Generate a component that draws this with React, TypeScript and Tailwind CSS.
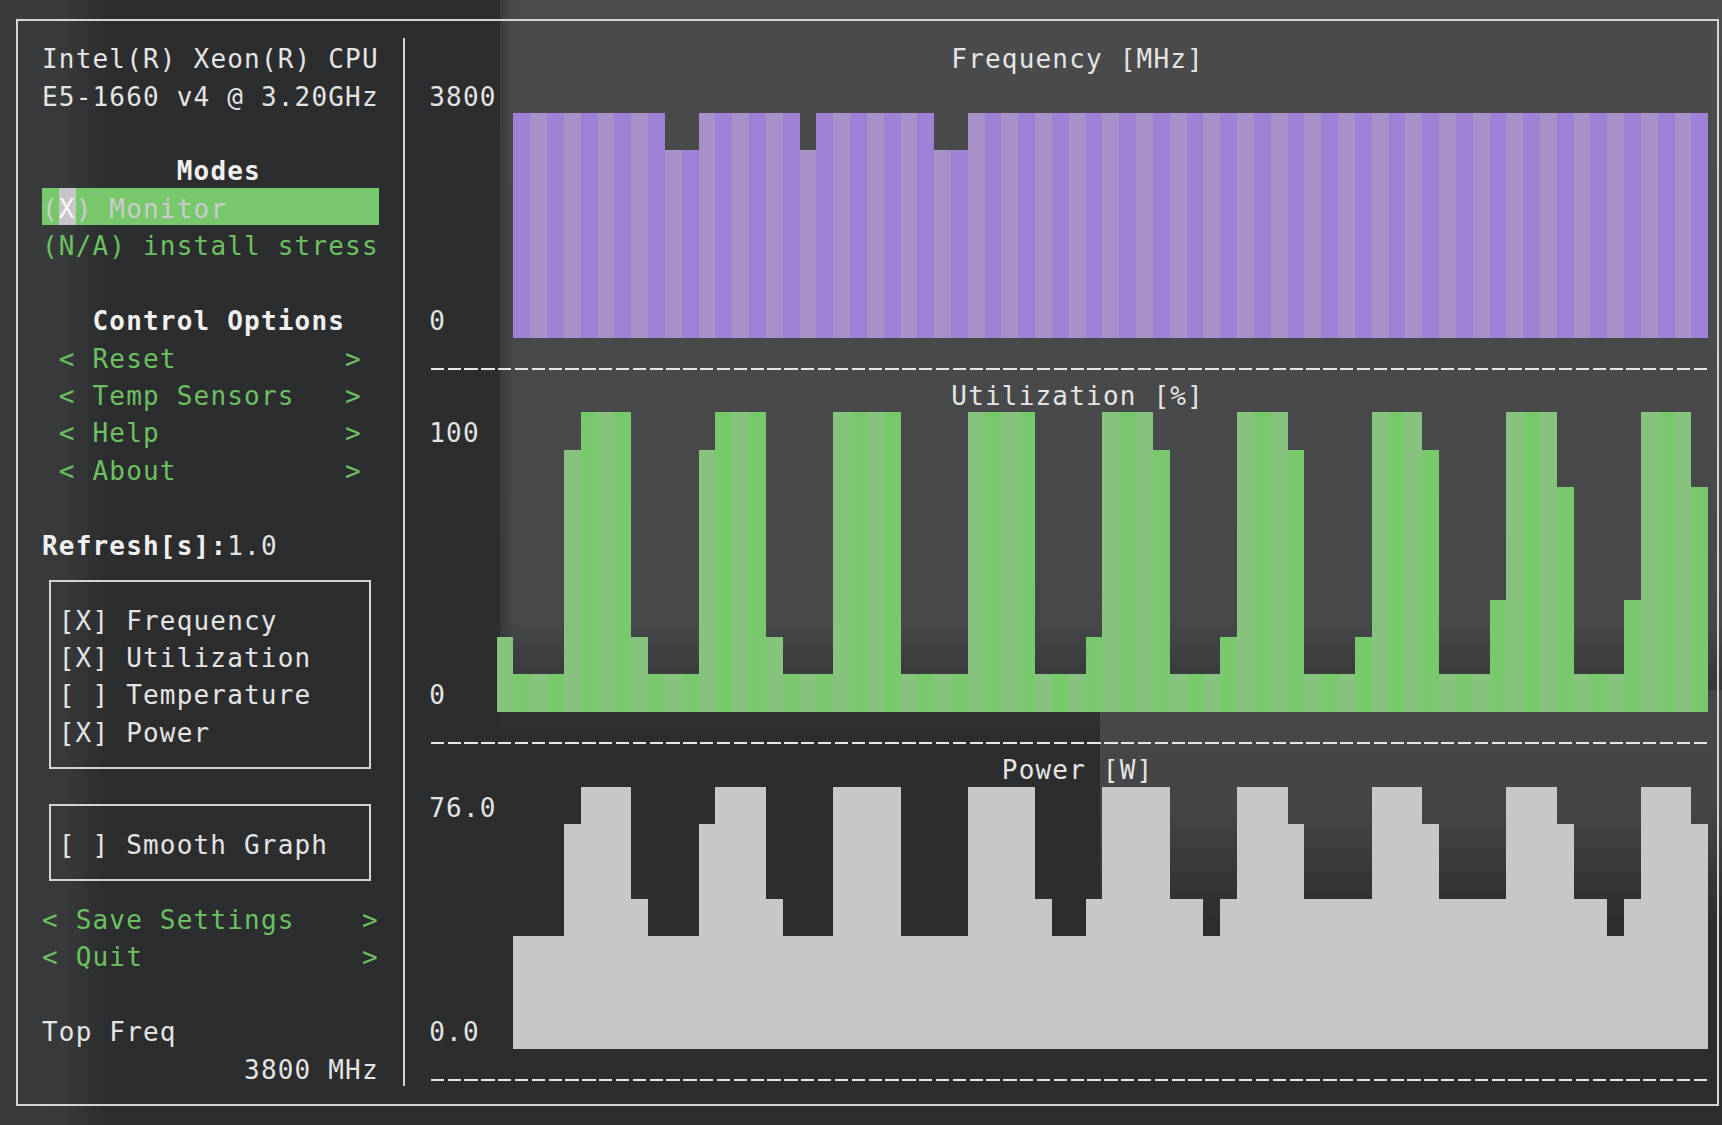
const RH = 37.43

// run-length lists: [height in rows, number of columns]
const UTIL: [number, number][] = [
  [2, 1], [1, 3], [7, 1], [8, 3], [2, 1], [1, 3], [7, 1], [8, 3], [2, 1], [1, 3], [8, 4], [1, 4], [8, 4],
  [1, 3], [2, 1], [8, 3], [7, 1], [1, 3], [2, 1], [8, 3], [7, 1], [1, 3], [2, 1], [8, 3], [7, 1], [1, 3],
  [3, 1], [8, 3], [6, 1], [1, 3], [3, 1], [8, 3], [6, 1],
]
const POWER: [number, number][] = [
  [3, 3], [6, 1], [7, 3], [4, 1], [3, 3], [6, 1], [7, 3], [4, 1], [3, 3], [7, 4], [3, 4], [7, 4], [4, 1],
  [3, 2], [4, 1], [7, 4], [4, 2], [3, 1], [4, 1], [7, 3], [6, 1], [4, 4], [7, 3], [6, 1], [4, 4], [7, 3],
  [6, 1], [4, 2], [3, 1], [4, 1], [7, 3], [6, 1],
]

function expand(runs: [number, number][]) {
  return runs.flatMap(([h, n]) => Array.from({ length: n }, () => h))
}

const FREQ = Array.from({ length: 71 }, (_, i) => ([39, 40, 47, 55, 56].includes(i + 30) ? 5 : 6))

function Row({ className = '', children }: { className?: string; children?: React.ReactNode }) {
  return <div className={`h-[37.43px] shrink-0 pt-[3px] whitespace-pre ${className}`}>{children}</div>
}

function Dashes() {
  return (
    <div className="h-[37.43px] shrink-0 pt-[30.6px]">
      <div className="h-[2px] w-[1279.84px] bg-[repeating-linear-gradient(90deg,transparent_0_1.7px,#e6e6e6_1.7px_15px,transparent_15px_16.84px)]" />
    </div>
  )
}

function Bars({ data, startCol, kind }: { data: number[]; startCol: number; kind: 'freq' | 'util' | 'power' }) {
  return (
    <div className="flex items-end">
      {data.map((h, i) => {
        const even = (startCol + i) % 2 === 0
        let cls = 'bg-[#c7c7c7]'
        if (kind === 'freq') cls = even ? 'bg-[#9e80d4]' : 'bg-[#a891c8]'
        if (kind === 'util') cls = even ? 'bg-[#77c96b]' : 'bg-[#87c27f]'
        return <div key={i} className={`w-[16.84px] shrink-0 ${cls}`} style={{ height: h * RH }} />
      })}
    </div>
  )
}

function LeftPanel() {
  const btn = 'text-[#6cc061]'
  return (
    <div className="w-[385.3px] shrink-0 pl-[24.3px] flex flex-col">
      <Row>Intel(R) Xeon(R) CPU</Row>
      <Row>E5-1660 v4 @ 3.20GHz</Row>
      <Row />
      <Row className="pl-[134.72px] font-bold text-[#f0f0f0]">Modes</Row>
      <div className="h-[37.43px] w-[336.8px] shrink-0 flex bg-[#77c86b] text-[#cbcbcb] whitespace-pre">
        <span className="pt-[3px]">(</span>
        <span className="pt-[3px] bg-[#c6c6c6] text-[#f8f8f8]">X</span>
        <span className="pt-[3px]">) Monitor</span>
      </div>
      <Row className={btn}>(N/A) install stress</Row>
      <Row />
      <Row className="pl-[50.52px] font-bold text-[#f0f0f0]">Control Options</Row>
      <Row className={`pl-[16.84px] ${btn}`}>{'< Reset          >'}</Row>
      <Row className={`pl-[16.84px] ${btn}`}>{'< Temp Sensors   >'}</Row>
      <Row className={`pl-[16.84px] ${btn}`}>{'< Help           >'}</Row>
      <Row className={`pl-[16.84px] ${btn}`}>{'< About          >'}</Row>
      <Row />
      <Row><span className="font-bold text-[#f0f0f0]">Refresh[s]:</span>1.0</Row>

      {/* graph toggles */}
      <div className="py-[17.7px] shrink-0">
        <div className="ml-[7.4px] w-[322px] h-[189.15px] border-2 border-[#d4d4d4] pt-[17.73px] pl-[7.4px]">
          <Row>[X] Frequency</Row>
          <Row>[X] Utilization</Row>
          <Row>[ ] Temperature</Row>
          <Row>[X] Power</Row>
        </div>
      </div>
      <div className="py-[17.7px] shrink-0">
        <div className="ml-[7.4px] w-[322px] h-[76.86px] border-2 border-[#d4d4d4] pt-[17.73px] pl-[7.4px]">
          <Row>[ ] Smooth Graph</Row>
        </div>
      </div>

      <Row className={btn}>{'< Save Settings    >'}</Row>
      <Row className={btn}>{'< Quit             >'}</Row>
      <Row />
      <Row>Top Freq</Row>
      <Row>{'            3800 MHz'}</Row>
    </div>
  )
}

function RightPanel() {
  return (
    <div className="flex-1 pl-[24.3px] flex flex-col">
      <Row className="pl-[522.04px]">Frequency [MHz]</Row>
      <div className="flex h-[262.01px] shrink-0">
        <div className="w-[84.2px] shrink-0 flex flex-col justify-between">
          <Row>3800</Row>
          <Row>0</Row>
        </div>
        <Bars data={FREQ} startCol={30} kind="freq" />
      </div>
      <Dashes />

      <Row className="pl-[522.04px]">Utilization [%]</Row>
      <div className="flex h-[299.44px] shrink-0">
        <div className="w-[67.36px] shrink-0 flex flex-col justify-between">
          <Row>100</Row>
          <Row>0</Row>
        </div>
        <Bars data={expand(UTIL)} startCol={29} kind="util" />
      </div>
      <Dashes />

      <Row className="pl-[572.56px]">Power [W]</Row>
      <div className="flex h-[262.01px] shrink-0">
        <div className="w-[84.2px] shrink-0 flex flex-col justify-between">
          <Row>76.0</Row>
          <Row>0.0</Row>
        </div>
        <Bars data={expand(POWER)} startCol={30} kind="power" />
      </div>
      <Dashes />
    </div>
  )
}

export default function App() {
  return (
    <div className="w-[1722px] h-[1125px] overflow-hidden pl-[15.7px] pt-[18.5px] [font-family:'DejaVu_Sans_Mono',monospace] text-[26px] leading-[37.43px] tracking-[1.187px] text-[#e4e4e4] [background:linear-gradient(90deg,#3a3b3d_0,#38393b_65px,rgba(56,57,59,0)_105px)_0_0/110px_1125px_no-repeat,linear-gradient(90deg,#2c2d2f,rgba(44,45,47,0))_488px_0/26px_720px_no-repeat,linear-gradient(180deg,#4a4b4d_0,#47484a_620px,rgba(71,72,74,0)_730px)_500px_0/1222px_730px_no-repeat,linear-gradient(180deg,#464749_0,#444547_120px,rgba(68,69,71,0)_230px)_1100px_690px/622px_230px_no-repeat,#2c2d2f]">
      <div className="w-[1703.3px] h-[1087.5px] border-2 border-[#d4d4d4] flex py-[17.7px]">
        <LeftPanel />
        <div className="w-[2px] shrink-0 bg-[#d4d4d4]" />
        <RightPanel />
      </div>
    </div>
  )
}
